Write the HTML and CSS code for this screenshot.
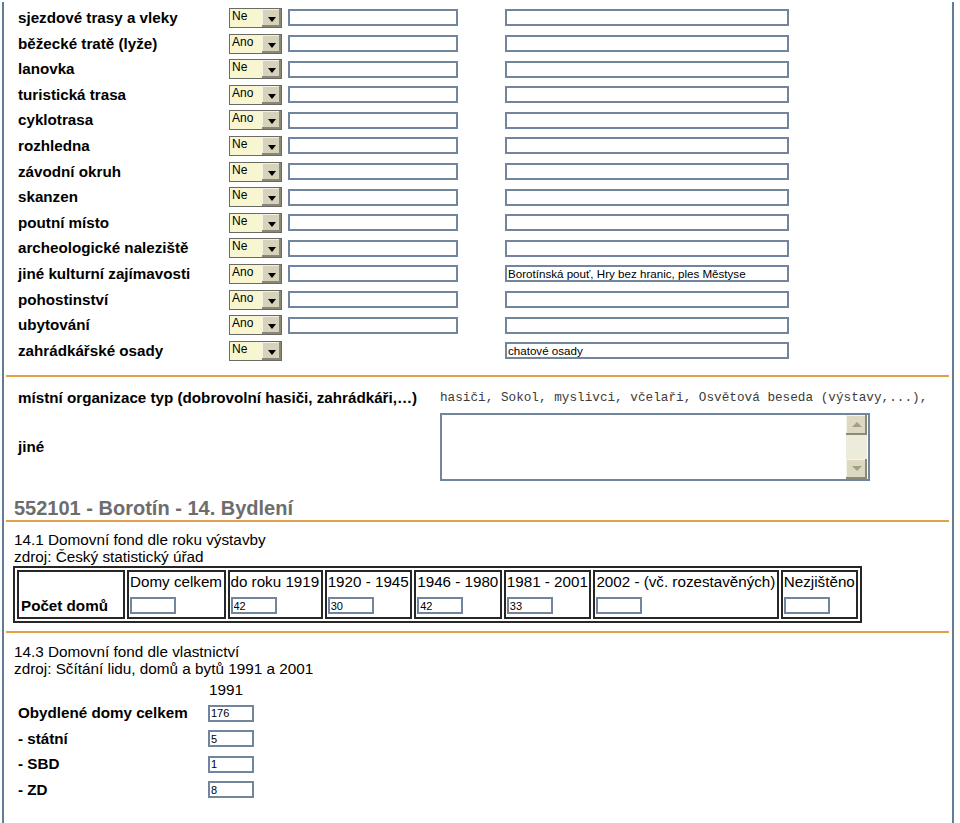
FILE: index.html
```html
<!DOCTYPE html>
<html lang="cs">
<head>
<meta charset="utf-8">
<title>552101 - Borotín - Bydlení</title>
<link rel="stylesheet" href="styles.css">
</head>
<body>
<div class="page">
  <div class="features">
    <span class="lbl">sjezdové trasy a vleky</span>
    <span class="sel"><select><option>Ano</option><option selected>Ne</option></select><span class="sel-btn"><i class="tri-down"></i></span></span>
    <input class="txt t1" type="text" value=""><input class="txt t2" type="text" value="">

    <span class="lbl">běžecké tratě (lyže)</span>
    <span class="sel"><select><option selected>Ano</option><option>Ne</option></select><span class="sel-btn"><i class="tri-down"></i></span></span>
    <input class="txt t1" type="text" value=""><input class="txt t2" type="text" value="">

    <span class="lbl">lanovka</span>
    <span class="sel"><select><option>Ano</option><option selected>Ne</option></select><span class="sel-btn"><i class="tri-down"></i></span></span>
    <input class="txt t1" type="text" value=""><input class="txt t2" type="text" value="">

    <span class="lbl">turistická trasa</span>
    <span class="sel"><select><option selected>Ano</option><option>Ne</option></select><span class="sel-btn"><i class="tri-down"></i></span></span>
    <input class="txt t1" type="text" value=""><input class="txt t2" type="text" value="">

    <span class="lbl">cyklotrasa</span>
    <span class="sel"><select><option selected>Ano</option><option>Ne</option></select><span class="sel-btn"><i class="tri-down"></i></span></span>
    <input class="txt t1" type="text" value=""><input class="txt t2" type="text" value="">

    <span class="lbl">rozhledna</span>
    <span class="sel"><select><option>Ano</option><option selected>Ne</option></select><span class="sel-btn"><i class="tri-down"></i></span></span>
    <input class="txt t1" type="text" value=""><input class="txt t2" type="text" value="">

    <span class="lbl">závodní okruh</span>
    <span class="sel"><select><option>Ano</option><option selected>Ne</option></select><span class="sel-btn"><i class="tri-down"></i></span></span>
    <input class="txt t1" type="text" value=""><input class="txt t2" type="text" value="">

    <span class="lbl">skanzen</span>
    <span class="sel"><select><option>Ano</option><option selected>Ne</option></select><span class="sel-btn"><i class="tri-down"></i></span></span>
    <input class="txt t1" type="text" value=""><input class="txt t2" type="text" value="">

    <span class="lbl">poutní místo</span>
    <span class="sel"><select><option>Ano</option><option selected>Ne</option></select><span class="sel-btn"><i class="tri-down"></i></span></span>
    <input class="txt t1" type="text" value=""><input class="txt t2" type="text" value="">

    <span class="lbl">archeologické naleziště</span>
    <span class="sel"><select><option>Ano</option><option selected>Ne</option></select><span class="sel-btn"><i class="tri-down"></i></span></span>
    <input class="txt t1" type="text" value=""><input class="txt t2" type="text" value="">

    <span class="lbl">jiné kulturní zajímavosti</span>
    <span class="sel"><select><option selected>Ano</option><option>Ne</option></select><span class="sel-btn"><i class="tri-down"></i></span></span>
    <input class="txt t1" type="text" value=""><input class="txt t2" type="text" value="Borotínská pouť, Hry bez hranic, ples Městyse">

    <span class="lbl">pohostinství</span>
    <span class="sel"><select><option selected>Ano</option><option>Ne</option></select><span class="sel-btn"><i class="tri-down"></i></span></span>
    <input class="txt t1" type="text" value=""><input class="txt t2" type="text" value="">

    <span class="lbl">ubytování</span>
    <span class="sel"><select><option selected>Ano</option><option>Ne</option></select><span class="sel-btn"><i class="tri-down"></i></span></span>
    <input class="txt t1" type="text" value=""><input class="txt t2" type="text" value="">

    <span class="lbl">zahrádkářské osady</span>
    <span class="sel"><select><option>Ano</option><option selected>Ne</option></select><span class="sel-btn"><i class="tri-down"></i></span></span>
    <span class="empty"></span><input class="txt t2" type="text" value="chatové osady">
  </div>

  <div class="rule rule-1"></div>

  <div class="org">
    <span class="lbl">místní organizace typ (dobrovolní hasiči, zahrádkáři,…)</span>
    <span class="mono">hasiči, Sokol, myslivci, včelaři, Osvětová beseda (výstavy,...),</span>
    <span class="lbl">jiné</span>
    <div class="ta">
      <textarea aria-label="jiné"></textarea>
      <div class="sb">
        <span class="sb-btn"><i class="tri-up"></i></span>
        <span class="sb-btn"><i class="tri-dn"></i></span>
      </div>
    </div>
  </div>

  <div class="section">
    <h2 class="title">552101 - Borotín - 14. Bydlení</h2>
  </div>
  <div class="rule rule-2"></div>

  <div class="section">
    <p class="sub">14.1 Domovní fond dle roku výstavby<br>zdroj: Český statistický úřad</p>
    <table class="grid-table">
      <tr>
        <td class="first"><b>Počet domů</b></td>
        <td>Domy celkem<input class="num" type="text" value=""></td>
        <td>do roku 1919<input class="num" type="text" value="42"></td>
        <td>1920 - 1945<input class="num" type="text" value="30"></td>
        <td>1946 - 1980<input class="num" type="text" value="42"></td>
        <td>1981 - 2001<input class="num" type="text" value="33"></td>
        <td>2002 - (vč. rozestavěných)<input class="num" type="text" value=""></td>
        <td>Nezjištěno<input class="num" type="text" value=""></td>
      </tr>
    </table>
  </div>
  <div class="rule rule-3"></div>

  <div class="section">
    <p class="sub sub-3">14.3 Domovní fond dle vlastnictví<br>zdroj: Sčítání lidu, domů a bytů 1991 a 2001</p>
    <div class="own">
      <span></span><span class="year">1991</span>
      <span class="lbl">Obydlené domy celkem</span><input class="num own-in" type="text" value="176">
      <span class="lbl">- státní</span><input class="num own-in" type="text" value="5">
      <span class="lbl">- SBD</span><input class="num own-in" type="text" value="1">
      <span class="lbl">- ZD</span><input class="num own-in" type="text" value="8">
    </div>
  </div>
</div>
</body>
</html>
```

FILE: styles.css
```css
html, body {
  margin: 0;
  padding: 0;
  background: #ffffff;
}

body {
  font-family: "Liberation Sans", Arial, sans-serif;
  color: #000;
}

.page {
  box-sizing: border-box;
  width: 952px;
  min-height: 821px;
  margin: 2px 0 0 2px;
  padding-top: 3.2px;
  border-left: 2px solid #5f7c98;
  border-right: 2px solid #5f7c98;
}

.lbl {
  font-weight: bold;
  font-size: 15.2px;
  line-height: 18px;
  white-space: nowrap;
}

/* feature rows */
.features {
  display: grid;
  grid-template-columns: 211px 59px 217px 284px;
  grid-auto-rows: 25.6px;
  align-items: center;
  padding-left: 14px;
}

.sel {
  display: inline-flex;
  box-sizing: border-box;
  width: 53px;
  height: 20px;
  border: 1px solid #6b6b66;
  background: #f8f6d1;
}

.sel select {
  -webkit-appearance: none;
  appearance: none;
  box-sizing: border-box;
  width: 32px;
  height: 18px;
  margin: 0;
  border: 0;
  padding: 0 0 4px 2px;
  background: #f8f6d1;
  font-family: "Liberation Sans", Arial, sans-serif;
  font-size: 12px;
  color: #000;
  outline: none;
}

.sel-btn {
  box-sizing: border-box;
  width: 19px;
  height: 18px;
  display: flex;
  align-items: center;
  justify-content: center;
  padding-top: 3px;
  background: #d7d3bb;
  box-shadow: inset -2px -2px 0 #8a8775, inset 1px 1px 0 #f3f1e6;
}

.tri-down {
  width: 0;
  height: 0;
  border-left: 4px solid transparent;
  border-right: 4px solid transparent;
  border-top: 5px solid #000;
}

.txt {
  box-sizing: border-box;
  height: 17px;
  margin: 0;
  padding: 0 1px;
  border: 2px solid #71869d;
  background: #fff;
  font-family: "Liberation Sans", Arial, sans-serif;
  font-size: 11.6px;
  color: #000;
}

.t1 { width: 170px; }
.t2 { width: 284px; }

/* rules */
.rule {
  height: 2px;
  margin: 0 3px 0 2px;
  background: #e0a04d;
}

.rule-1 { margin-top: 11.4px; }
.rule-2 { margin-top: 0; }
.rule-3 { margin-top: 8px; }

/* organisations */
.org {
  display: grid;
  grid-template-columns: 422px 440px;
  row-gap: 6px;
  align-items: center;
  padding: 12px 0 0 14px;
}

.mono {
  font-family: "Liberation Mono", "Courier New", monospace;
  font-size: 12.7px;
  line-height: 18px;
  color: #3b3b3b;
  white-space: nowrap;
}

.ta {
  box-sizing: border-box;
  display: flex;
  width: 430px;
  height: 68px;
  border: 2px solid #71869d;
  background: #fff;
}

.ta textarea {
  flex: 1;
  margin: 0;
  border: 0;
  padding: 2px;
  resize: none;
  overflow: hidden;
  outline: none;
  background: #fff;
}

.sb {
  width: 21px;
  display: flex;
  flex-direction: column;
  justify-content: space-between;
  background: #edebd9;
  margin-right: 1px;
}

.sb-btn {
  box-sizing: border-box;
  height: 20px;
  display: flex;
  align-items: center;
  justify-content: center;
  background: #dcd8c2;
  box-shadow: inset -2px -2px 0 #8d8a77, inset 1px 1px 0 #f6f4ea;
}

.tri-up {
  width: 0;
  height: 0;
  border-left: 5px solid transparent;
  border-right: 5px solid transparent;
  border-bottom: 5px solid #a29f84;
}

.tri-dn {
  width: 0;
  height: 0;
  border-left: 5px solid transparent;
  border-right: 5px solid transparent;
  border-top: 5px solid #a29f84;
}

/* sections */
.section {
  padding-left: 10px;
}

.title {
  margin: 16.5px 0 0 0;
  font-size: 20px;
  line-height: 23px;
  font-weight: bold;
  color: #6d6d6d;
}

.sub {
  margin: 8.5px 0 0 0;
  font-size: 15.3px;
  line-height: 17px;
}

.sub-3 {
  margin-top: 9.5px;
}

/* table 14.1 */
.grid-table {
  margin: 1.5px 0 0 -1px;
  border: 2px solid #262626;
  border-spacing: 2px;
  font-size: 15.2px;
  line-height: 17px;
}

.grid-table td {
  padding: 1px 1.5px 1px 1px;
  border: 2px solid #262626;
  white-space: nowrap;
  vertical-align: top;
}

.grid-table td.first {
  width: 101px;
  vertical-align: bottom;
  padding: 1px 1px 3px 2px;
}

.num {
  display: block;
  box-sizing: border-box;
  width: 46px;
  height: 17px;
  margin: 7px 0 2px 0;
  padding: 0 1px;
  border: 2px solid #71869d;
  background: #fff;
  font-family: "Liberation Sans", Arial, sans-serif;
  font-size: 11px;
  color: #000;
}

/* ownership */
.own {
  display: grid;
  grid-template-columns: 190px 60px;
  grid-template-rows: 19.5px;
  grid-auto-rows: 25.6px;
  align-items: center;
  padding: 4px 0 0 4px;
}

.year {
  align-self: start;
  font-size: 15.3px;
  line-height: 17px;
  padding-left: 1px;
}

.own-in {
  margin: 0;
}
```
